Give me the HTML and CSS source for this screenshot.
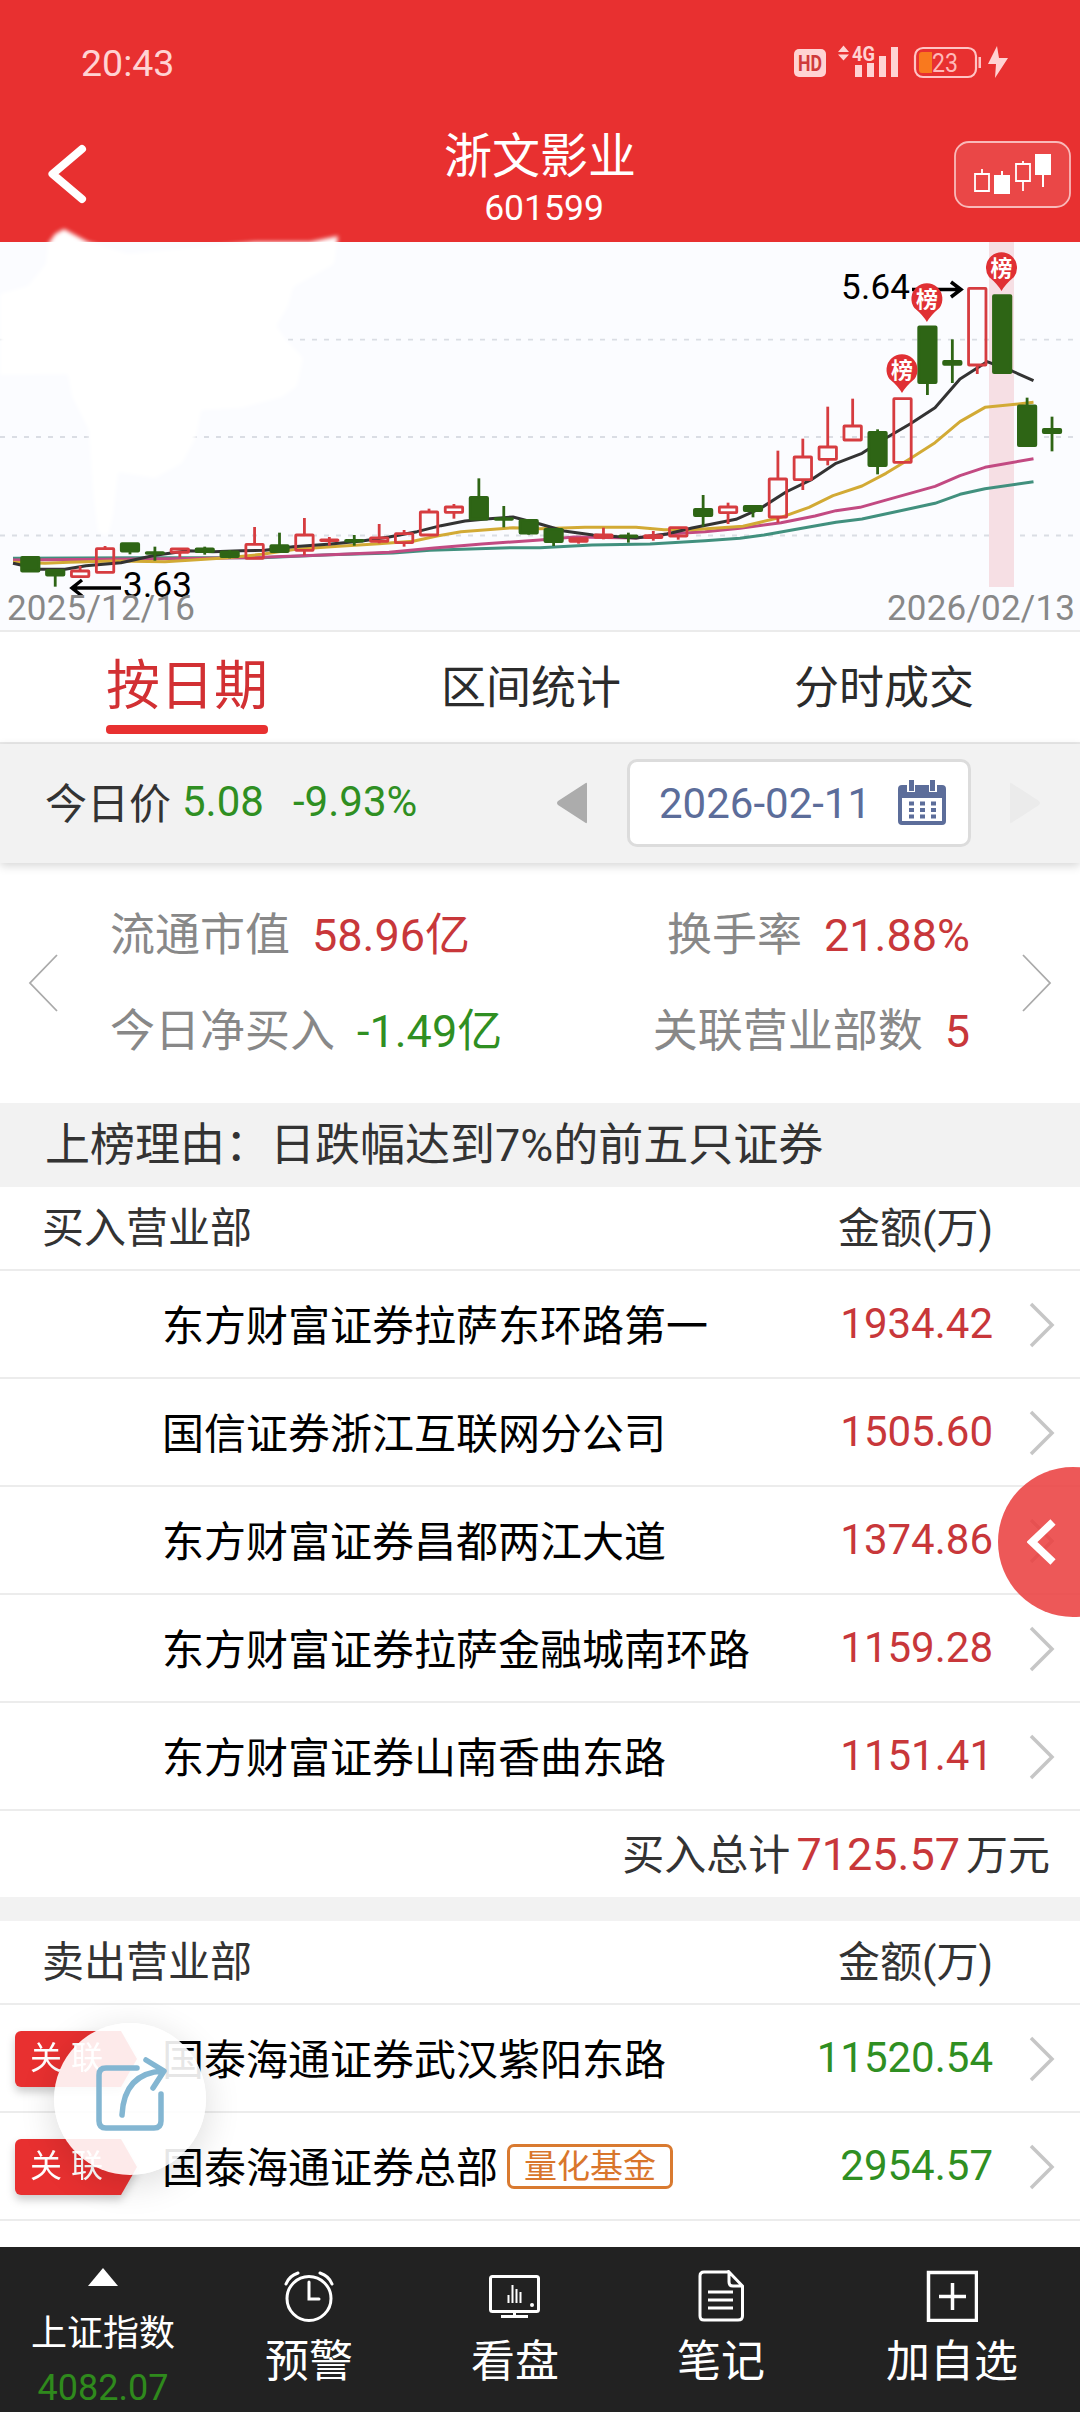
FILE: index.html
```html
<!DOCTYPE html>
<html lang="zh-CN">
<head>
<meta charset="utf-8">
<title>浙文影业 601599</title>
<link rel="stylesheet" href="styles.css">
</head>
<body>
<div class="app">
  <header class="header">
    <div class="status">
      <span class="clock">20:43</span>
      <svg class="status-icons" viewBox="780 30 240 60" width="240" height="60">
        <rect x="794" y="49" width="32" height="28" rx="5" fill="#ffd3d3"/>
        <text x="798" y="71" font-size="22" font-weight="700" fill="#cf3a3a" textLength="24" lengthAdjust="spacingAndGlyphs">HD</text>
        <path d="M838 52l5.500-6.500 5.500 6.500zM838 54.500l5.500 6 5.500-6z" fill="#ffd3d3"/>
        <text x="852" y="61" font-size="21" font-weight="700" fill="#ffd3d3" textLength="23" lengthAdjust="spacingAndGlyphs">4G</text>
        <path d="M855 65h7v12h-7zM867 63h7v14h-7zM879 56h7v21h-7zM891 47h7v30h-7z" fill="#ffd3d3"/>
        <rect x="915" y="48" width="61" height="29" rx="8" fill="none" stroke="#ffc4c4" stroke-width="2.200"/>
        <path d="M922 52h10v21h-10q-3 0-3-3v-15q0-3 3-3z" fill="#f9791e"/>
        <text x="932" y="72" font-size="25" fill="#ffb9b9" textLength="26" lengthAdjust="spacingAndGlyphs">23</text>
        <path d="M978.500 57h2.500v11h-2.500z" fill="#ffc4c4"/>
        <path d="M997 46l-9 18h8l-1 14 13-20h-9z" fill="#ffd3d3"/>
      </svg>
    </div>
    <div class="titlebar">
      <svg class="back" viewBox="0 0 48 64" width="48" height="64"><path d="M38 7L8.500 32L38 57" fill="none" stroke="#fff" stroke-width="8" stroke-linecap="round" stroke-linejoin="round"/></svg>
      <div class="title"><h1>浙文影业</h1><p>601599</p></div>
      <svg class="kbtn" viewBox="954 141 117 67" width="117" height="67">
        <rect x="955" y="142" width="115" height="65" rx="14" fill="#ea4747" stroke="#f9b9b9" stroke-width="1.800"/>
        <path d="M975 174h14v17h-14zM982 174v-5M1016 164h14v17h-14zM1023 164v-3M1023 181v10" fill="none" stroke="#fff" stroke-width="1.800"/>
        <path d="M994 175h16v19h-16zM1001 171h2v4h-2zM1035 154h16v21h-16zM1042 175h2v12h-2z" fill="#fff"/>
      </svg>
    </div>
  </header>

  <section class="chart">
    <svg viewBox="0 242 1080 389" width="1080" height="389" id="kline">
      <path class="grid" d="M0 339.700H1075M0 437H1075M0 535.500H1075"/>
      <path class="smudge" d="M48 244L55 234L64 229L88 242L128 254L255 242L310 242L338 236L334 264L293 287L288 306L276 326L286 340L303 358L297 386L282 397L241 408L201 410L196 437L182 463L155 478L118 472L113 515L108 536L98 532L93 490L89 430L72 396L68 374L0 375V294L28 286L46 264Z"/>
      <rect x="989" y="242" width="25" height="345" fill="#f6dfe4"/>
      <g id="averages"></g>
      <g id="candles"></g>
      <path class="arrow" d="M121 588H73M82 580L72 588L82 596M912 289.500H960M951 282L961 289.500L951 297"/>
      <text class="mark" x="123" y="597.300" textLength="69">3.63</text>
      <text class="mark" x="841" y="298.500" textLength="69">5.64</text>
      <text class="day" x="7" y="619.500" textLength="188">2025/12/16</text>
      <text class="day" x="887" y="619.500" textLength="188">2026/02/13</text>
      <g id="pins"></g>
    </svg>
  </section>

  <nav class="tabs"><a class="tab active">按日期</a><a class="tab">区间统计</a><a class="tab">分时成交</a></nav>

  <section class="pricebar">
    <span class="label">今日价</span><span class="num green price">5.08</span><span class="num green change">-9.93%</span>
    <svg class="prev" viewBox="0 0 32 42" width="32" height="42"><path d="M31 2V40Q31 42 29 40.500L2 23Q0 21 2 19L29 1.500Q31 0 31 2Z" fill="#acacac"/></svg>
    <div class="datebox"><span>2026-02-11</span>
      <svg viewBox="0 0 48 46" width="48" height="46"><path fill="#5c6d9a" fill-rule="evenodd" d="M4 5H44Q48 5 48 9V41Q48 45 44 45H4Q0 45 0 41V9Q0 5 4 5ZM4 18V41H44V18Z"/><path d="M13 0V12M35 0V12" stroke="#fff" stroke-width="8"/><path d="M13.500 0V11M34.500 0V11" stroke="#5c6d9a" stroke-width="5"/><path d="M11 23.500H38M11 30H38M11 36.500H38" stroke="#5c6d9a" stroke-width="4" stroke-dasharray="5 6"/></svg>
    </div>
    <svg class="next" viewBox="0 0 32 42" width="32" height="42"><path d="M1 2V40Q1 42 3 40.500L30 23Q32 21 30 19L3 1.500Q1 0 1 2Z" fill="#ebebeb"/></svg>
  </section>

  <section class="stats">
    <svg class="side" viewBox="0 0 30 58" width="30" height="58"><path d="M29 1L2 29L29 57" fill="none" stroke="#aaa" stroke-width="1.800"/></svg>
    <div class="statgrid">
      <div><span>流通市值</span><b class="red">58.96亿</b></div>
      <div class="end"><span>换手率</span><b class="red">21.88%</b></div>
      <div><span>今日净买入</span><b class="green">-1.49亿</b></div>
      <div class="end"><span>关联营业部数</span><b class="red">5</b></div>
    </div>
    <svg class="side" viewBox="0 0 30 58" width="30" height="58"><path d="M1 1L28 29L1 57" fill="none" stroke="#aaa" stroke-width="1.800"/></svg>
  </section>

  <section class="reason">上榜理由：日跌幅达到7%的前五只证券</section>

  <section class="list">
    <div class="thead"><span>买入营业部</span><span>金额(万)</span></div>
    <div class="row"><span class="name">东方财富证券拉萨东环路第一</span><span class="amt red">1934.42</span><svg class="go" viewBox="0 0 26 46"><path d="M2 2L23 23L2 44"/></svg></div>
    <div class="row"><span class="name">国信证券浙江互联网分公司</span><span class="amt red">1505.60</span><svg class="go" viewBox="0 0 26 46"><path d="M2 2L23 23L2 44"/></svg></div>
    <div class="row"><span class="name">东方财富证券昌都两江大道</span><span class="amt red">1374.86</span><svg class="go" viewBox="0 0 26 46"><path d="M2 2L23 23L2 44"/></svg></div>
    <div class="row"><span class="name">东方财富证券拉萨金融城南环路</span><span class="amt red">1159.28</span><svg class="go" viewBox="0 0 26 46"><path d="M2 2L23 23L2 44"/></svg></div>
    <div class="row"><span class="name">东方财富证券山南香曲东路</span><span class="amt red">1151.41</span><svg class="go" viewBox="0 0 26 46"><path d="M2 2L23 23L2 44"/></svg></div>
    <div class="total"><span>买入总计</span><b class="red">7125.57</b><span>万元</span></div>
  </section>

  <section class="list sell">
    <div class="thead"><span>卖出营业部</span><span>金额(万)</span></div>
    <div class="row"><span class="tagwrap"><i class="tag">关联</i></span><span class="name">国泰海通证券武汉紫阳东路</span><span class="amt green">11520.54</span><svg class="go" viewBox="0 0 26 46"><path d="M2 2L23 23L2 44"/></svg></div>
    <div class="row"><span class="tagwrap"><i class="tag">关联</i></span><span class="name">国泰海通证券总部<em class="chip">量化基金</em></span><span class="amt green">2954.57</span><svg class="go" viewBox="0 0 26 46"><path d="M2 2L23 23L2 44"/></svg></div>
  </section>

  <footer class="bottom">
    <div class="index"><i class="up"></i><span>上证指数</span><b>4082.07</b></div>
    <div class="item">
      <svg viewBox="283 2270 52 52" width="52" height="52"><g fill="none" stroke="#fff" stroke-width="3" stroke-linecap="round"><circle cx="309" cy="2298.500" r="22"/><path d="M309 2282V2299H319M286 2284Q289 2276 298 2273M332 2284Q329 2276 320 2273"/></g></svg>
      <span>预警</span></div>
    <div class="item">
      <svg viewBox="489 2270 52 52" width="52" height="52"><g fill="none" stroke="#fff"><rect x="490.500" y="2276.500" width="48" height="35" rx="2" stroke-width="3"/><path d="M514.500 2311V2316M501 2316.500H528" stroke-width="3"/><path d="M508.500 2295V2303M512.500 2285V2303M516.500 2289V2303M520.500 2292V2303" stroke-width="2"/></g><circle cx="532" cy="2305" r="2" fill="#fff"/></svg>
      <span>看盘</span></div>
    <div class="item">
      <svg viewBox="695 2270 52 52" width="52" height="52"><path d="M729 2272H704Q700 2272 700 2276V2316Q700 2320 704 2320H738Q742.500 2320 742.500 2316V2286L729 2272V2282Q729 2286 733 2286H742M708 2292H733M708 2300H733M708 2308H733" fill="none" stroke="#fff" stroke-width="3"/></svg>
      <span>笔记</span></div>
    <div class="item">
      <svg viewBox="926 2270 52 52" width="52" height="52"><path d="M928.500 2272.500H976.500V2320.500H928.500ZM939 2296.500H966M952.500 2283V2310" fill="none" stroke="#fff" stroke-width="3.500"/></svg>
      <span>加自选</span></div>
  </footer>

  <div class="drawer"><svg viewBox="0 0 30 48" width="30" height="48"><path d="M26 4L5 24L26 44" fill="none" stroke="#fff" stroke-width="7.500"/></svg></div>
  <div class="share"><svg viewBox="94 2056 74 76" width="74" height="76"><path d="M137 2068H106Q99 2068 99 2075V2121Q99 2128 106 2128H154Q161 2128 161 2121V2094M122 2115Q124 2073 163 2071M146 2060L164 2071L153 2088" fill="none" stroke="#83b6d2" stroke-width="5.500" stroke-linecap="round" stroke-linejoin="round"/></svg></div>
</div>
<script src="chart.js"></script>
</body>
</html>
```
FILE: styles.css
```css
* { box-sizing: border-box; }
body { margin: 0; background: #fff; color: #333; font-family: Roboto, "Noto Sans CJK SC", sans-serif; }
h1, p, b, i, em { margin: 0; font-weight: 400; font-style: normal; }
.app { position: relative; width: 1080px; height: 2412px; overflow: hidden; display: flex; flex-direction: column; }
.app > * { flex-shrink: 0; }
svg { display: block; flex-shrink: 0; }
.red { color: #c8373a; }
.green { color: #2f8f22; }

.header { height: 242px; background: #e83030; color: #fff; }
.status { height: 120px; padding: 30px 60px 0 81px; display: flex; justify-content: space-between; }
.clock { font-size: 37.500px; line-height: 66px; color: #ffd3d3; }
.titlebar { height: 122px; display: grid; grid-template-columns: 126px 1fr 126px; align-items: center; }
.back { margin-left: 44px; margin-bottom: 14px; }
.kbtn { margin-bottom: 14px; }
.title { text-align: center; height: 122px; }
.title h1 { font-size: 48px; line-height: 52px; padding-top: 11px; }
.title p { font-size: 35.500px; line-height: 40px; padding: 5px 0 0 8px; }

.chart { height: 390px; background: #fbfcff; border-bottom: 2px solid #ebebeb; }
.chart svg { overflow: visible; }
.grid { fill: none; stroke: #dadde4; stroke-width: 1.800; stroke-dasharray: 5 7; }
.smudge { fill: #fff; filter: blur(2px); }
.avg { fill: none; stroke-width: 3; stroke-linejoin: round; }
.up-candle { fill: none; stroke: #d63c40; stroke-width: 2.800; }
.down-candle { fill: #2e6515; stroke: #2e6515; stroke-width: 2.800; }
.arrow { fill: none; stroke: #000; stroke-width: 3.500; }
.mark { font-size: 35px; fill: #000; }
.day { font-size: 35px; fill: #888; }
.pin { fill: #e03034; }
.pin-text { font-size: 22px; font-weight: 700; fill: #fff; text-anchor: middle; }

.tabs { height: 112px; padding: 0 106px; display: flex; justify-content: space-between; border-bottom: 2px solid #e9e9e9; }
.tab { font-size: 45px; line-height: 113px; height: 110px; color: #2b2b2b; }
.tab.active { position: relative; font-size: 54px; line-height: 109px; color: #d23033; }
.tab.active::after { content: ""; position: absolute; left: 0; right: 0; top: 93px; height: 9px; border-radius: 4px; background: #e83030; }

.pricebar { height: 119px; background: #f2f2f2; display: flex; align-items: center; padding: 0 0 1px 45px; font-size: 42px; box-shadow: 0 3px 9px rgba(0,0,0,.16); z-index: 1; }
.label { width: 137px; padding-bottom: 6px; }
.num { padding-bottom: 3px; }
.price { width: 111px; }
.change { width: 263px; }
.prev { margin-right: 39px; }
.datebox { width: 344px; height: 88px; border: 3px solid #dcdcdc; border-radius: 10px; background: #fff; color: #5c6d9a; display: flex; align-items: center; justify-content: space-between; padding: 0 22px 0 29px; }
.next { margin-left: 38px; }

.stats { height: 240px; display: flex; align-items: center; justify-content: space-between; padding: 0 28px; }
.statgrid { width: 860px; padding-bottom: 7px; display: grid; grid-template-columns: 1fr 1fr; grid-auto-rows: 96px; align-items: center; font-size: 45px; color: #888; }
.statgrid div { display: flex; align-items: baseline; gap: 22px; white-space: nowrap; }
.statgrid .end { justify-content: flex-end; }

.reason { height: 84px; line-height: 86px; background: #f2f2f2; padding-left: 45px; font-size: 45px; }

.thead { height: 84px; display: flex; justify-content: space-between; align-items: center; padding: 0 87px 8px 42px; font-size: 42px; border-bottom: 2px solid #ececec; }
.row { height: 108px; display: grid; grid-template-columns: 162px 1fr auto 87px; align-items: center; font-size: 42px; border-bottom: 2px solid #ececec; }
.name { grid-column: 2; color: #000; display: flex; align-items: center; padding-bottom: 3px; }
.go { width: 26px; height: 46px; margin: 2px 0 0 36px; fill: none; stroke: #c6c6c6; stroke-width: 3.500; }
.amt { padding-bottom: 2px; }
.total { height: 86px; display: flex; justify-content: flex-end; align-items: baseline; gap: 6px; padding: 10px 30px 0 0; font-size: 42px; }
.total b { font-size: 45px; }
.sell { border-top: 24px solid #f2f2f2; height: 350px; }
.tagwrap { padding: 2px 0 0 15px; filter: drop-shadow(0 5px 4px rgba(0,0,0,.2)); }
.tag { display: block; width: 122px; height: 56px; line-height: 55px; padding-left: 15px; font-size: 32px; letter-spacing: 9px; color: #fff; background: #e83030; border-radius: 6px 0 0 6px; clip-path: polygon(0 0, 106px 0, 100% 50%, 106px 100%, 0 100%); }
.chip { height: 45px; margin: 3px 0 0 9px; padding: 0 14px; border: 3px solid #d97a30; border-radius: 7px; color: #d9762c; font-size: 33px; line-height: 40px; }

.bottom { height: 165px; background: #222; color: #fff; display: grid; grid-template-columns: repeat(4, 206px) 1fr; }
.index { display: flex; flex-direction: column; align-items: center; padding-top: 21px; }
.up { border: 15px solid transparent; border-top-width: 0; border-bottom: 18px solid #fff; }
.index span { font-size: 36px; line-height: 50px; margin-top: 23px; }
.index b { font-size: 36px; line-height: 50px; margin-top: 4px; color: #2f8a1c; }
.item { display: flex; flex-direction: column; align-items: center; padding-top: 23px; }
.item span { font-size: 44px; line-height: 60px; margin-top: 10px; }

.drawer { position: absolute; left: 998px; top: 1467px; width: 150px; height: 150px; border-radius: 50%; background: rgba(234,65,65,.88); padding: 51px 29px; }
.share { position: absolute; left: 54px; top: 2023px; width: 152px; height: 152px; border-radius: 50%; background: rgba(255,255,255,.9); padding: 33px 0 0 40px; box-shadow: 0 8px 36px rgba(0,0,0,.14); }
```
FILE: chart.js
```js
// Vertical values are stored in thirds of a pixel below TOP.
const TOP = 230;
const py = v => TOP + v / 3;
const px = i => 30.3 + 24.92 * i;
const NS = "http://www.w3.org/2000/svg";

function add(parent, tag, attrs, text) {
  const node = document.createElementNS(NS, tag);
  for (const key in attrs) node.setAttribute(key, attrs[key]);
  if (text) node.textContent = text;
  document.getElementById(parent).appendChild(node);
}

// [direction, body top, body bottom, wick top, wick bottom]
const candles = [
  ["g",979,1026],["g",1018,1038,1018,1070],["r",1020,1043,1008,1043],["r",953,1030,948,1030],
  ["g",938,966,938,973],["g",965,971,950,992],["r",954,970,954,982],["g",954,968,950,974],
  ["g",963,983,960,985],["r",940,988,891,988],["g",944,968,908,968],["r",912,964,864,976],
  ["r",927,935,921,947],["g",928,936,915,947],["r",921,937,882,940],["r",908,941,900,950],
  ["r",843,918,836,918],["r",828,850,822,866],["g",799,870,745,870],["g",863,871,828,892],
  ["g",868,912,868,914],["g",895,938,895,948],["r",923,937,923,941],["r",912,925,893,928],
  ["g",915,922,908,938],["r",914,926,903,932],["r",890,921,890,929],["g",835,860,795,890],
  ["r",828,851,818,882],["g",826,845,826,862],["r",744,864,662,878],["r",678,752,626,780],
  ["r",648,691,530,706],["r",585,633,506,633],["g",604,710,598,733],["r",503,700],
  ["g",288,461,288,495],["g",391,406,328,459],["r",172,408,172,432],["g",194,431],
  ["g",525,650,503,650],["g",595,611,560,664]
];

const averages = [
  ["#41907e", "13,985 138,983 262,983 330,974 393,969 430,961 513,953 540,953 592,945 650,942 705,932 740,925 764,915 809,891 836,877 862,867 935,820 960,793 985,776 1033.5,755"],
  ["#c24a82", "13,990 172,986 262,982 330,974 389,967 434,954 482,942 540,930 574,921 636,924 667,912 705,905 740,895 781,878 815,858 836,842 860,832 884,812 935,769 960,737 985,712 1033.5,686"],
  ["#d2aa35", "13,997 45,1000 69,997 114,993 165,995 193,990 224,984 262,973 296,958 331,950 379,941 413,934 437,918 461,905 513,893 540,896 585,892 636,892 664,899 692,899 743,889 781,862 809,832 833,797 862,768 886,730 910,686 935,638 960,575 985,532 1033.5,517"],
  ["#333333", "13,1000 40,1018 65,1018 86,1007 121,998 155,976 188,962 213,965 241,962 265,961 293,950 331,942 362,933 389,921 417,905 441,887 465,873 486,867 513,861 540,882 564,903 593,915 636,924 667,912 692,894 736,868 760,836 786,786 812,748 836,700 862,670 886,624 910,582 935,533 960,447 987,395 1012,423 1033.5,452"]
];

averages.forEach(([stroke, points]) => add("averages", "polyline", {
  class: "avg", stroke,
  points: points.split(" ").map(p => { const [x, y] = p.split(","); return x + "," + py(+y); }).join(" ")
}));

candles.forEach(([dir, top, bottom, high, low], i) => {
  const cls = dir === "g" ? "down-candle" : "up-candle";
  const x = px(i), t = py(top) + 1, b = Math.max(py(bottom) - 1, t + 0.6);
  add("candles", "rect", { class: cls, x: x - 8.7, y: t, width: 17.4, height: b - t, rx: 0.6 });
  if (high < top) add("candles", "path", { class: cls, d: `M${x} ${py(high)}V${t}` });
  if (low > bottom) add("candles", "path", { class: cls, d: `M${x} ${b}V${py(low)}` });
});

[[902, 370], [926.9, 299], [1001.500, 268]].forEach(([x, y]) => {
  add("pins", "path", { class: "pin", d: `M${x - 12.5} ${y + 9}A15.500 15.500 0 1 1 ${x + 12.5} ${y + 9}Q${x + 4} ${y + 16} ${x} ${y + 23}Q${x - 4} ${y + 16} ${x - 12.5} ${y + 9}Z` });
  add("pins", "text", { class: "pin-text", x: x, y: y + 8 }, "榜");
});
```
